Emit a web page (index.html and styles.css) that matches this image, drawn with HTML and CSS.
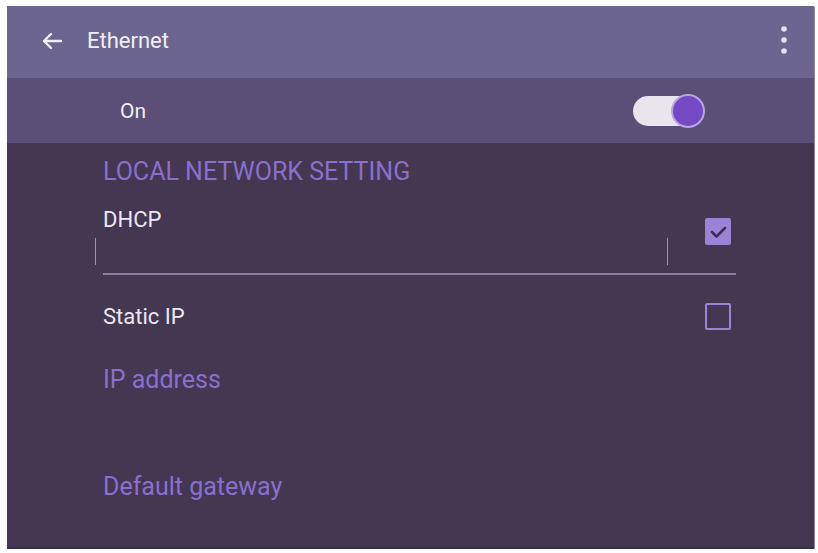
FILE: index.html
```html
<!DOCTYPE html>
<html lang="en">

<head>
    <meta charset="UTF-8">
    <meta name="viewport" content="width=device-width, initial-scale=1.0">
    <title>Ethernet</title>
    <link rel="stylesheet" href="styles.css">
</head>

<body>
    <div class="screen">
        <header class="app-bar">
            <svg class="back-icon" width="22" height="18" viewBox="0 0 22 18">
                <path d="M20 9H3M10 2L3 9l7 7" fill="none" stroke="#f1eef6" stroke-width="2.4"
                    stroke-linecap="round" stroke-linejoin="round" />
            </svg>
            <span class="app-title">Ethernet</span>
            <svg class="menu-icon" width="8" height="30" viewBox="0 0 8 30">
                <circle cx="4" cy="4" r="2.8" fill="#e6e0f2" />
                <circle cx="4" cy="15" r="2.8" fill="#e6e0f2" />
                <circle cx="4" cy="26" r="2.8" fill="#e6e0f2" />
            </svg>
        </header>

        <div class="switch-bar">
            <span class="switch-label">On</span>
            <div class="toggle">
                <div class="toggle-knob"></div>
            </div>
        </div>

        <main class="settings">
            <h2 class="section-title">LOCAL NETWORK SETTING</h2>

            <div class="option option--field">
                <div class="option-main">
                    <div class="option-label">DHCP</div>
                    <div class="option-field"></div>
                </div>
                <span class="checkbox checkbox--on">
                    <svg width="19" height="14" viewBox="0 0 19 14">
                        <path d="M3 7l4.5 4.5L16 3" fill="none" stroke="#3d2f57" stroke-width="2.6"
                            stroke-linecap="round" stroke-linejoin="round" />
                    </svg>
                </span>
            </div>

            <div class="option option--plain">
                <div class="option-label">Static IP</div>
                <span class="checkbox"></span>
            </div>

            <div class="sub-title sub-title--ip">IP address</div>
            <div class="sub-title sub-title--gw">Default gateway</div>
        </main>
    </div>
</body>

</html>
```

FILE: styles.css
```css
* {
    box-sizing: border-box;
    margin: 0;
    padding: 0;
}

body {
    background-color: #fdfdfd;
    font-family: Roboto, "Noto Sans", sans-serif;
}

.screen {
    width: 807px;
    height: 543px;
    margin: 6px 0 0 7px;
    background-color: #433752;
    display: flex;
    flex-direction: column;
    border-bottom: 2px solid #3a3044;
    box-shadow: 1px 1px 0 #8f8799;
}

/* top bar */
.app-bar {
    height: 72px;
    background-color: #6b6590;
    display: flex;
    align-items: center;
    padding: 0 0 0 34px;
    color: #f1eef6;
}

.back-icon {
    margin-top: -2px;
}

.app-title {
    font-size: 22px;
    line-height: 26px;
    margin-left: 24px;
    margin-top: -3px;
}

.menu-icon {
    margin-left: auto;
    margin-right: 26px;
    margin-top: -4px;
}

/* on / off */
.switch-bar {
    height: 65px;
    background-color: #5b4f77;
    display: flex;
    align-items: center;
    padding-left: 113px;
    color: #f1eef6;
}

.switch-label {
    font-size: 21px;
    line-height: 24px;
}

.toggle {
    margin-left: auto;
    margin-right: 111px;
    width: 70px;
    height: 30px;
    border-radius: 15px;
    background-color: #e9e5ec;
    position: relative;
}

.toggle-knob {
    position: absolute;
    right: -2px;
    top: -2px;
    width: 34px;
    height: 34px;
    border-radius: 50%;
    background-color: #7549c4;
    border: 2px solid #b9a4e4;
}

/* body */
.settings {
    padding: 17px 78px 0 96px;
}

.section-title {
    font-size: 25px;
    line-height: 24px;
    font-weight: 400;
    color: #8a70cc;
}

.option {
    display: flex;
    justify-content: space-between;
    padding-right: 5px;
}

.option--field {
    margin-top: 26px;
    align-items: flex-start;
    padding-bottom: 8px;
    border-bottom: 2px solid #8b80a2;
}

.option--plain {
    margin-top: 28px;
    align-items: center;
}

.option-main {
    flex: 1;
}

.option-label {
    font-size: 22px;
    line-height: 20px;
    color: #ece8f2;
}

.option-field {
    height: 27px;
    margin: 8px 0 0 -8px;
    width: 573px;
    border-left: 1px solid #9d94ad;
    border-right: 1px solid #9d94ad;
}

.checkbox {
    width: 26px;
    height: 27px;
    border: 2px solid #9b84d6;
    border-radius: 2px;
    display: flex;
    align-items: center;
    justify-content: center;
}

.option--field .checkbox {
    margin-top: 8px;
}

.checkbox--on {
    background-color: #9b84d8;
}

.sub-title {
    font-size: 25px;
    line-height: 24px;
    color: #8a70cc;
}

.sub-title--ip {
    margin-top: 38px;
}

.sub-title--gw {
    margin-top: 83px;
}
```
